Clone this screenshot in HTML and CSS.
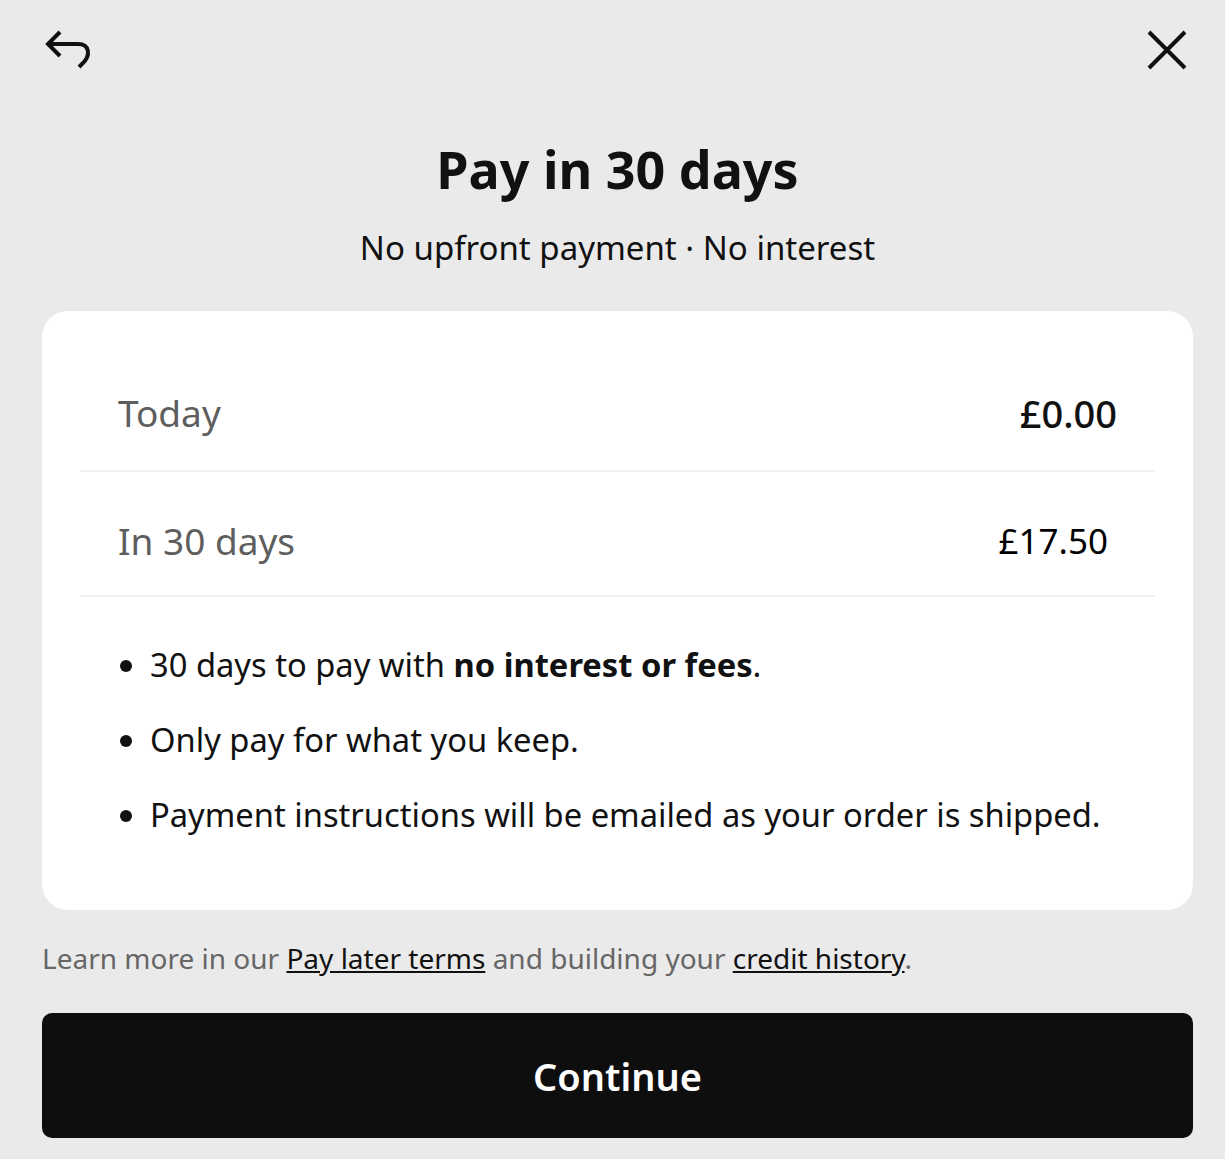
FILE: index.html
```html
<!DOCTYPE html>
<html>
<head>
<meta name="viewport" content="width=device-width, initial-scale=1">
<link rel="stylesheet" href="styles.css">
</head>
<body>

<div class="sheet">
  <div class="topbar">
    <button type="button" class="icon-btn" aria-label="Back">
      <svg width="48" height="44" viewBox="0 0 48 44" fill="none" stroke="#111" stroke-width="4" stroke-linecap="butt" stroke-linejoin="miter">
        <path d="M16 4 L4 16 L16 28"/>
        <path d="M4 16 H34 C46 16 47 28 38 36 L35 39"/>
      </svg>
    </button>
    <button type="button" class="icon-btn" aria-label="Close">
      <svg width="40" height="40" viewBox="0 0 40 40" fill="none" stroke="#111" stroke-width="4">
        <path d="M2 2 L38 38 M38 2 L2 38"/>
      </svg>
    </button>
  </div>

  <h1 class="title">Pay in 30 days</h1>
  <p class="subtitle">No upfront payment · No interest</p>

  <div class="card">
    <div class="row first">
      <span class="row-label">Today</span>
      <span class="row-amount strong">£0.00</span>
    </div>
    <div class="row">
      <span class="row-label">In 30 days</span>
      <span class="row-amount later">£17.50</span>
    </div>
    <ul class="points">
      <li>30 days to pay with <b>no interest or fees</b>.</li>
      <li>Only pay for what you keep.</li>
      <li>Payment instructions will be emailed as your order is shipped.</li>
    </ul>
  </div>

  <p class="terms">Learn more in our <a href="#">Pay later terms</a> and building your <a href="#">credit history</a>.</p>

  <button type="button" class="continue">Continue</button>
</div>

</body>
</html>
```

FILE: styles.css
```css
body {
    margin: 0;
    background-color: #eaeaea;
    font-family: "Noto Sans", "Open Sans", sans-serif;
    color: #111;
}

.sheet {
    padding: 0 32px 0 42px;
}

.topbar {
    display: flex;
    justify-content: space-between;
    align-items: center;
    padding-top: 28px;
}

.icon-btn {
    background: none;
    border: none;
    padding: 0;
    display: flex;
    cursor: pointer;
}

.icon-btn:first-child {
    margin-left: 2px;
}

.icon-btn:last-child {
    margin-right: 6px;
}

.title {
    margin: 61px 0 0;
    text-align: center;
    font-size: 52px;
    font-weight: 700;
    line-height: 72px;
}

.subtitle {
    margin: 20px 0 0;
    text-align: center;
    font-size: 33px;
    line-height: 46px;
}

.card {
    margin-top: 40px;
    background-color: #fff;
    border-radius: 26px;
    padding: 0 38px 75px;
}

.row {
    display: flex;
    justify-content: space-between;
    align-items: center;
    box-sizing: border-box;
    height: 125px;
    padding: 13px 38px 0;
    border-bottom: 2px solid #efefef;
}

.row.first {
    height: 161px;
    padding-top: 44px;
}

.row-label {
    font-size: 37px;
    color: #5e5e5e;
}

.row-amount {
    font-size: 35px;
    color: #000;
}

.row-amount.strong {
    font-size: 38px;
    font-weight: 500;
    color: #111;
}

.row-amount.later {
    margin-right: 9px;
}

.points {
    margin: 48px 0 0;
    padding: 0 0 0 70px;
    font-size: 32.7px;
    line-height: 40px;
}

.points li {
    margin-bottom: 35px;
}

.points li:last-child {
    margin-bottom: 0;
}

.terms {
    margin: 28px 0 0;
    font-size: 28px;
    line-height: 40px;
    color: #666;
}

.terms a {
    color: #111;
}

.continue {
    display: block;
    width: 100%;
    margin-top: 35px;
    height: 125px;
    border: none;
    border-radius: 10px;
    background-color: #0e0e0e;
    color: #fff;
    font-family: inherit;
    font-size: 38px;
    font-weight: 600;
    cursor: pointer;
}
```
